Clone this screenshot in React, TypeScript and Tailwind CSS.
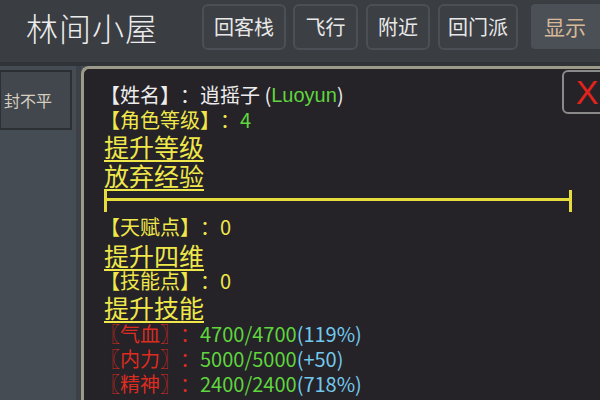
import type { ReactNode } from 'react'

const FONT = { fontFamily: '"Noto Sans CJK SC", "Noto Sans", sans-serif' }

const NAV = [
  { label: '回客栈', cls: 'w-[84px]' },
  { label: '飞行', cls: 'w-[65px] ml-[7px]' },
  { label: '附近', cls: 'w-[64px] ml-[8px]' },
  { label: '回门派', cls: 'w-[80px] ml-[8px]' },
]

function Row({ h, children }: { h: string; children: ReactNode }) {
  return (
    <div className={`${h} flex items-center whitespace-nowrap text-[20px] leading-[24px]`}>
      {children}
    </div>
  )
}

function Action({ h, label }: { h: string; label: string }) {
  return (
    <div className={`${h} flex items-center whitespace-nowrap pl-[4px]`}>
      <span className="text-[25px] leading-[25px] text-[#f0e84a] underline decoration-[2px] underline-offset-[3px]">
        {label}
      </span>
    </div>
  )
}

function Stat({ label, value, extra }: { label: string; value: string; extra: string }) {
  return (
    <Row h="h-[25px]">
      <span className="text-[#dc2c20]">〖{label}〗：</span>
      <span className="text-[#5fd53e]">{value}</span>
      <span className="text-[#72c9ec]">{extra}</span>
    </Row>
  )
}

export default function App() {
  return (
    <div
      className="w-[600px] h-[400px] overflow-hidden bg-[#454b52] flex flex-col [text-spacing-trim:space-all]"
      style={FONT}
    >
      <header className="h-[66px] shrink-0 flex items-start pt-[4px] bg-[#3a3d42] border-b-[4px] border-[#303338]">
        <div className="w-[202px] shrink-0 h-[46px] pl-[26px] flex items-center text-[32px] font-light text-[#ececec] tracking-[1px]">
          林间小屋
        </div>
        <div className="flex shrink-0">
          {NAV.map((n) => (
            <div
              key={n.label}
              className={`${n.cls} shrink-0 h-[46px] flex items-center justify-center rounded-[6px] border-[2px] border-[#4c5056] bg-[#3c3f44] text-[20px] text-[#e8e8e8]`}
            >
              {n.label}
            </div>
          ))}
          <div className="w-[80px] shrink-0 h-[45px] ml-[13px] flex items-center pl-[13px] rounded-l-[4px] bg-[#4b5057] text-[21px] text-[#d8b896]">
            显示
          </div>
        </div>
      </header>

      <div className="flex flex-1 min-h-0">
        <aside className="w-[81px] shrink-0 pt-[4px] bg-[#464c53] border-r-[5px] border-[#3d4147]">
          <div className="w-[73px] h-[60px] flex items-center pl-[3px] -ml-[1px] border-[2px] border-[#2c3035] bg-[#42474d] text-[16px] text-[#d8cfc2]">
            封不平
          </div>
        </aside>

        <main className="relative flex-1 bg-[#252228] border-t-[3px] border-l-[3px] border-[#9c9a88] rounded-tl-[8px] pl-[16px] pt-[14px]">
          <div className="absolute right-[-8px] top-[1px] w-[46px] h-[44px] rounded-[6px] border-[2px] border-[#8a8a8a] flex items-center justify-center">
            <span
              className="text-[34px] leading-none text-[#e0231c] pl-[4px]"
              style={{ fontFamily: '"Liberation Sans", sans-serif' }}
            >
              X
            </span>
          </div>

          <Row h="h-[24px]">
            <span className="text-[#ececec]">【姓名】：逍摇子 (</span>
            <span className="text-[#5fd53e]" style={{ fontFamily: '"Liberation Sans", sans-serif' }}>
              Luoyun
            </span>
            <span className="text-[#ececec]">)</span>
          </Row>
          <Row h="h-[25px]">
            <span className="text-[#f0e84a]">【角色等级】：</span>
            <span className="text-[#5fd53e]">4</span>
          </Row>
          <Action h="h-[28px]" label="提升等级" />
          <Action h="h-[30px]" label="放弃经验" />

          <div className="h-[22px] flex items-start pl-[4px] pr-[28px]">
            <div className="w-[3px] h-[22px] bg-[#e6dd3c]" />
            <div className="flex-1 h-[3px] mt-[8px] bg-[#e6dd3c]" />
            <div className="w-[3px] h-[22px] bg-[#e6dd3c]" />
          </div>

          <Row h="h-[30px]">
            <span className="text-[#f0e84a]">【天赋点】：0</span>
          </Row>
          <Action h="h-[26px]" label="提升四维" />
          <Row h="h-[26px]">
            <span className="text-[#f0e84a]">【技能点】：0</span>
          </Row>
          <Action h="h-[27px]" label="提升技能" />
          <Stat label="气血" value="4700/4700" extra="(119%)" />
          <Stat label="内力" value="5000/5000" extra="(+50)" />
          <Stat label="精神" value="2400/2400" extra="(718%)" />
        </main>
      </div>
    </div>
  )
}
